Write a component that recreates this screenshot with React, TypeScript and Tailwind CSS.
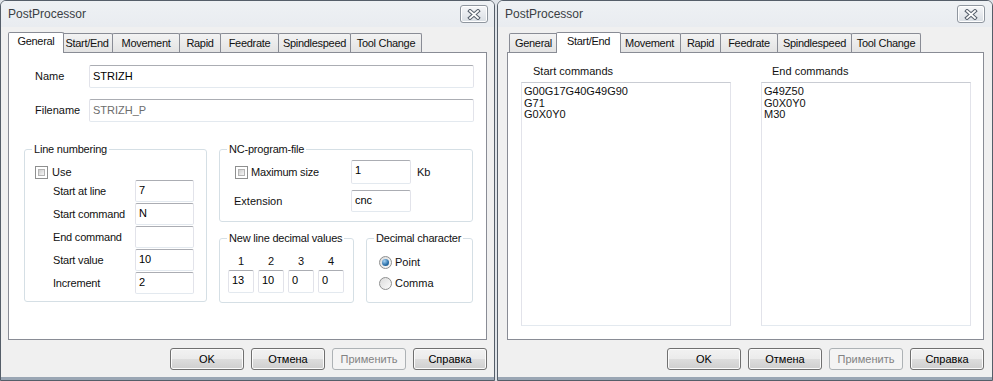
import React from "react";

type Tab = { label: string; w: number };

const leftTabs: Tab[] = [
  { label: "General", w: 52 },
  { label: "Start/End", w: 52 },
  { label: "Movement", w: 68 },
  { label: "Rapid", w: 42 },
  { label: "Feedrate", w: 59 },
  { label: "Spindlespeed", w: 73 },
  { label: "Tool Change", w: 72 },
];

const rightTabs: Tab[] = [
  { label: "General", w: 49 },
  { label: "Start/End", w: 61 },
  { label: "Movement", w: 63 },
  { label: "Rapid", w: 41 },
  { label: "Feedrate", w: 58 },
  { label: "Spindlespeed", w: 75 },
  { label: "Tool Change", w: 70 },
];

function CloseGlyph() {
  return (
    <svg width="14" height="11" viewBox="0 0 14 11">
      <path d="M3 2 L11 9 M11 2 L3 9" stroke="#5b6470" strokeWidth="3.8" strokeLinecap="square" />
      <path d="M3 2 L11 9 M11 2 L3 9" stroke="#ffffff" strokeWidth="1.7" strokeLinecap="square" />
    </svg>
  );
}

function TitleBar({ right }: { right: string }) {
  return (
    <div className="h-[26px] flex items-center pl-[7px] bg-gradient-to-b from-[#eef1f4] to-[#e9ecf0]">
      <span className="text-[12px] text-[#3a3e44] flex-1">PostProcessor</span>
      <div
        className={`w-[28px] h-[18px] rounded-[3px] border border-[#8f969f] bg-gradient-to-b from-[#f6f7f9] to-[#d9dee4] shadow-[inset_0_0_0_1px_#ffffff] flex items-center justify-center ${right}`}
      >
        <CloseGlyph />
      </div>
    </div>
  );
}

function TabStrip({ tabs, active }: { tabs: Tab[]; active: number }) {
  return (
    <div className="h-[20px] mt-[5px] flex items-end pl-[2px] relative z-10">
      {tabs.map((t, i) =>
        i === active ? (
          <div
            key={t.label}
            style={{ width: t.w + 4 }}
            className="h-[21px] -mb-px -mx-[2px] relative z-10 bg-white border border-b-0 border-[#898c95] rounded-t-[2px] flex justify-center pt-[2px] text-[11px] tracking-[-0.3px] leading-[13px] whitespace-nowrap"
          >
            {t.label}
          </div>
        ) : (
          <div
            key={t.label}
            style={{ width: t.w }}
            className="h-[19px] -ml-px first:ml-0 bg-gradient-to-b from-[#f3f3f3] to-[#e3e3e3] border border-b-0 border-[#898c95] rounded-t-[2px] flex justify-center pt-[3px] text-[11px] tracking-[-0.3px] leading-[13px] whitespace-nowrap"
          >
            {t.label}
          </div>
        )
      )}
    </div>
  );
}

function Field({
  value = "",
  muted = false,
  className = "",
}: {
  value?: string;
  muted?: boolean;
  className?: string;
}) {
  return (
    <div
      className={`bg-white border border-[#e2e3ea] border-t-[#abadb3] border-b-[#e3e9ef] rounded-[2px] pl-[3px] pt-[3px] text-[11px] leading-[13px] ${
        muted ? "text-[#6d6d6d]" : "text-black"
      } ${className}`}
    >
      {value}
    </div>
  );
}

function Group({
  title,
  className = "",
  children,
}: {
  title: string;
  className?: string;
  children?: React.ReactNode;
}) {
  return (
    <div className={`relative border border-[#d5dfe5] rounded-[3px] ${className}`}>
      <span className="absolute -top-[7px] left-[7px] bg-white px-[2px] text-[11px] leading-[13px] tracking-[-0.2px]">
        {title}
      </span>
      {children}
    </div>
  );
}

function Checkbox() {
  return (
    <span className="w-[13px] h-[13px] border border-[#8e8f8f] bg-white p-[2px] shrink-0">
      <span className="block w-full h-full border border-[#b4b4b4] bg-gradient-to-br from-[#cdcdcd] to-[#f7f7f7]" />
    </span>
  );
}

function Radio({ checked = false }: { checked?: boolean }) {
  return (
    <span className="w-[13px] h-[13px] rounded-full border border-[#8e8f8f] bg-gradient-to-br from-[#dcdcdc] to-[#fbfbfb] flex items-center justify-center shrink-0">
      {checked && (
        <span className="w-[7px] h-[7px] rounded-full bg-[radial-gradient(circle_at_35%_30%,#a6d3f5,#2a6fa8_60%,#1b4f7d)]" />
      )}
    </span>
  );
}

function Button({ label, disabled = false }: { label: string; disabled?: boolean }) {
  return (
    <div
      className={`w-[74px] h-[22px] rounded-[3px] border flex items-center justify-center text-[11px] ${
        disabled
          ? "border-[#adb2b5] bg-[#f4f4f4] text-[#838383]"
          : "border-[#707070] bg-[linear-gradient(to_bottom,#f2f2f2_0%,#ebebeb_50%,#dddddd_51%,#cfcfcf_100%)] shadow-[inset_0_0_0_1px_#fbfbfb] text-black"
      }`}
    >
      {label}
    </div>
  );
}

function Buttons() {
  return (
    <div className="mt-[8px] flex justify-end gap-[7px]">
      <Button label="OK" />
      <Button label="Отмена" />
      <Button label="Применить" disabled />
      <Button label="Справка" />
    </div>
  );
}

function LineRow({ label, value }: { label: string; value: string }) {
  return (
    <div className="flex items-center pl-[28px] mt-[1px]">
      <span className="w-[82px] text-[11px] tracking-[-0.2px]">{label}</span>
      <Field value={value} className="w-[59px] h-[22px]" />
    </div>
  );
}

function GeneralPanel() {
  return (
    <div className="h-[288px] bg-white border border-[#898c95] pt-[12px] pl-[15px] pr-[12px]">
      <div className="flex items-center pl-[11px]">
        <span className="w-[54px] text-[11px]">Name</span>
        <Field value="STRIZH" className="flex-1 h-[23px] pt-[4px]" />
      </div>
      <div className="flex items-center pl-[11px] mt-[11px]">
        <span className="w-[54px] text-[11px]">Filename</span>
        <Field value="STRIZH_P" muted className="flex-1 h-[23px] pt-[4px]" />
      </div>

      <div className="flex mt-[27px]">
        <Group title="Line numbering" className="w-[183px] h-[153px] pt-[16px]">
          <div className="flex items-center pl-[10px] h-[13px]">
            <Checkbox />
            <span className="ml-[4px] text-[11px]">Use</span>
          </div>
          <LineRow label="Start at line" value="7" />
          <LineRow label="Start command" value="N" />
          <LineRow label="End command" value="" />
          <LineRow label="Start value" value="10" />
          <LineRow label="Increment" value="2" />
        </Group>

        <div className="ml-[12px] w-[254px] flex flex-col">
          <Group title="NC-program-file" className="h-[73px] pt-[10px] pl-[15px]">
            <div className="flex items-center">
              <div className="w-[116px] flex items-center">
                <Checkbox />
                <span className="ml-[3px] text-[11px] tracking-[-0.2px]">Maximum size</span>
              </div>
              <Field value="1" className="w-[60px] h-[24px]" />
              <span className="ml-[6px] text-[11px]">Kb</span>
            </div>
            <div className="flex items-center mt-[6px]">
              <span className="w-[116px] text-[11px] -ml-px">Extension</span>
              <Field value="cnc" className="w-[60px] h-[22px] ml-px" />
            </div>
          </Group>

          <div className="flex mt-[16px]">
            <Group title="New line decimal values" className="w-[135px] h-[65px] pt-[16px] pl-[8px]">
              <div className="flex gap-[4px]">
                {["1", "2", "3", "4"].map((n) => (
                  <span key={n} className="w-[26px] text-center text-[11px] leading-[13px]">
                    {n}
                  </span>
                ))}
              </div>
              <div className="flex gap-[4px] mt-[2px]">
                {["13", "10", "0", "0"].map((v, i) => (
                  <Field key={i} value={v} className="w-[26px] h-[23px]" />
                ))}
              </div>
            </Group>
            <Group title="Decimal character" className="w-[107px] h-[65px] ml-auto pt-[17px] pl-[12px]">
              <div className="flex items-center">
                <Radio checked />
                <span className="ml-[3px] text-[11px] leading-[13px]">Point</span>
              </div>
              <div className="flex items-center mt-[8px]">
                <Radio />
                <span className="ml-[3px] text-[11px] leading-[13px]">Comma</span>
              </div>
            </Group>
          </div>
        </div>
      </div>
    </div>
  );
}

function Memo({ label, lines, labelPad }: { label: string; lines: string[]; labelPad: string }) {
  return (
    <div className="w-[210px] flex flex-col">
      <span className={`text-[11px] leading-[13px] ${labelPad}`}>{label}</span>
      <div className="mt-[4px] h-[244px] bg-white border border-[#e2e3ea] border-t-[#c9ccd3] border-b-[#e3e9ef] pl-[2px] pt-[3px] text-[11px] leading-[11.5px]">
        {lines.map((l) => (
          <div key={l}>{l}</div>
        ))}
      </div>
    </div>
  );
}

function StartEndPanel() {
  return (
    <div className="h-[288px] bg-white border border-[#898c95] pt-[12px] pl-[13px] flex gap-[30px]">
      <Memo label="Start commands" lines={["G00G17G40G49G90", "G71", "G0X0Y0"]} labelPad="pl-[12px]" />
      <Memo label="End commands" lines={["G49Z50", "G0X0Y0", "M30"]} labelPad="pl-[11px]" />
    </div>
  );
}

function Window({
  width,
  tabs,
  active,
  pad,
  closeRight,
  children,
}: {
  width: string;
  tabs: Tab[];
  active: number;
  pad: string;
  closeRight: string;
  children: React.ReactNode;
}) {
  return (
    <div
      className={`${width} h-[381px] flex flex-col bg-[#f0f0f0] border border-[#555e69] rounded-t-[6px] overflow-hidden shadow-[inset_0_-3px_0_#9aa6b4]`}
    >
      <TitleBar right={closeRight} />
      <div className={pad}>
        <TabStrip tabs={tabs} active={active} />
        {children}
        <Buttons />
      </div>
    </div>
  );
}

export default function App() {
  return (
    <div className="w-[993px] h-[381px] flex gap-[2px] bg-[#dfe3e8] font-['Liberation_Sans',Arial,sans-serif] text-[#111] overflow-hidden">
      <Window width="w-[495px]" tabs={leftTabs} active={0} pad="pl-[7px] pr-[7px]" closeRight="mr-[6px]">
        <GeneralPanel />
      </Window>
      <Window width="w-[496px]" tabs={rightTabs} active={1} pad="pl-[9px] pr-[8px]" closeRight="mr-[7px]">
        <StartEndPanel />
      </Window>
    </div>
  );
}
